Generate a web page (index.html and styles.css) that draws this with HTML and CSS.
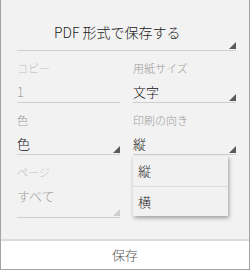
FILE: index.html
```html
<!DOCTYPE html>
<html lang="ja">
<head>
  <meta charset="UTF-8" />
  <meta name="viewport" content="width=device-width, initial-scale=1.0"/>
  <title>印刷</title>
  <link rel="stylesheet" href="styles.css">
</head>
<body>

  <div class="dialog">
    <div class="printer select">
      <span class="printer-name">PDF 形式で保存する</span>
    </div>

    <div class="fields">
      <div class="field disabled">
        <div class="label">コピー</div>
        <div class="value">1</div>
      </div>
      <div class="field select">
        <div class="label">用紙サイズ</div>
        <div class="value">文字</div>
      </div>

      <div class="field select">
        <div class="label">色</div>
        <div class="value">色</div>
      </div>
      <div class="field select open">
        <div class="label">印刷の向き</div>
        <div class="value">縦</div>
        <ul class="menu">
          <li>縦</li>
          <li>横</li>
        </ul>
      </div>

      <div class="field select disabled tall">
        <div class="label">ページ</div>
        <div class="value">すべて</div>
      </div>
    </div>

    <div class="footer">保存</div>
  </div>

</body>
</html>
```

FILE: styles.css
```css
* {
  margin: 0;
  padding: 0;
  box-sizing: border-box;
}

body {
  font-family: "Noto Sans CJK JP", "Noto Sans", sans-serif;
  font-weight: 300;
  background: #ffffff;
}

.dialog {
  width: 250px;
  height: 270px;
  display: flex;
  flex-direction: column;
  background: #f2f2f2;
  border: 1px solid #a3a3a3;
  border-top: none;
}

.select {
  position: relative;
}

.select::after {
  content: "";
  position: absolute;
  right: 0;
  bottom: 1px;
  border-left: 7px solid transparent;
  border-bottom: 7px solid #5a5a5a;
}

.printer {
  margin: 0 13px 0 16px;
  padding: 21px 0 7px 37px;
  border-bottom: 1px solid #cfcfcf;
  font-size: 14px;
  line-height: 22px;
  color: #1a1a1a;
}

.fields {
  display: grid;
  grid-template-columns: 103px 103px;
  column-gap: 13px;
  row-gap: 9px;
  padding: 9px 13px 0 16px;
}

.field {
  border-bottom: 1px solid #cfcfcf;
}

.label {
  font-size: 11px;
  line-height: 17px;
  color: #9a9a9a;
}

.value {
  margin-top: 5px;
  font-size: 13px;
  line-height: 20px;
  color: #111;
}

.disabled .label {
  color: #c2c2c2;
}

.disabled .value {
  color: #a0a0a0;
}

.disabled.select::after {
  border-bottom-color: #cdcdcd;
}

.tall .value {
  padding-bottom: 11px;
}

.menu {
  list-style: none;
  position: absolute;
  top: calc(100% + 2px);
  left: 0;
  width: 95px;
  background: #f1f1f1;
  box-shadow: 1px 2px 4px rgba(0, 0, 0, 0.35);
  z-index: 2;
}

.menu li {
  height: 30px;
  padding-left: 5px;
  font-size: 13px;
  line-height: 30px;
  color: #222;
}

.menu li + li {
  border-top: 1px solid #dcdcdc;
}

.footer {
  margin-top: auto;
  height: 30px;
  border-top: 2px solid #dcdcdc;
  background: #ffffff;
  text-align: center;
  font-size: 13px;
  line-height: 28px;
  color: #555;
}
```
